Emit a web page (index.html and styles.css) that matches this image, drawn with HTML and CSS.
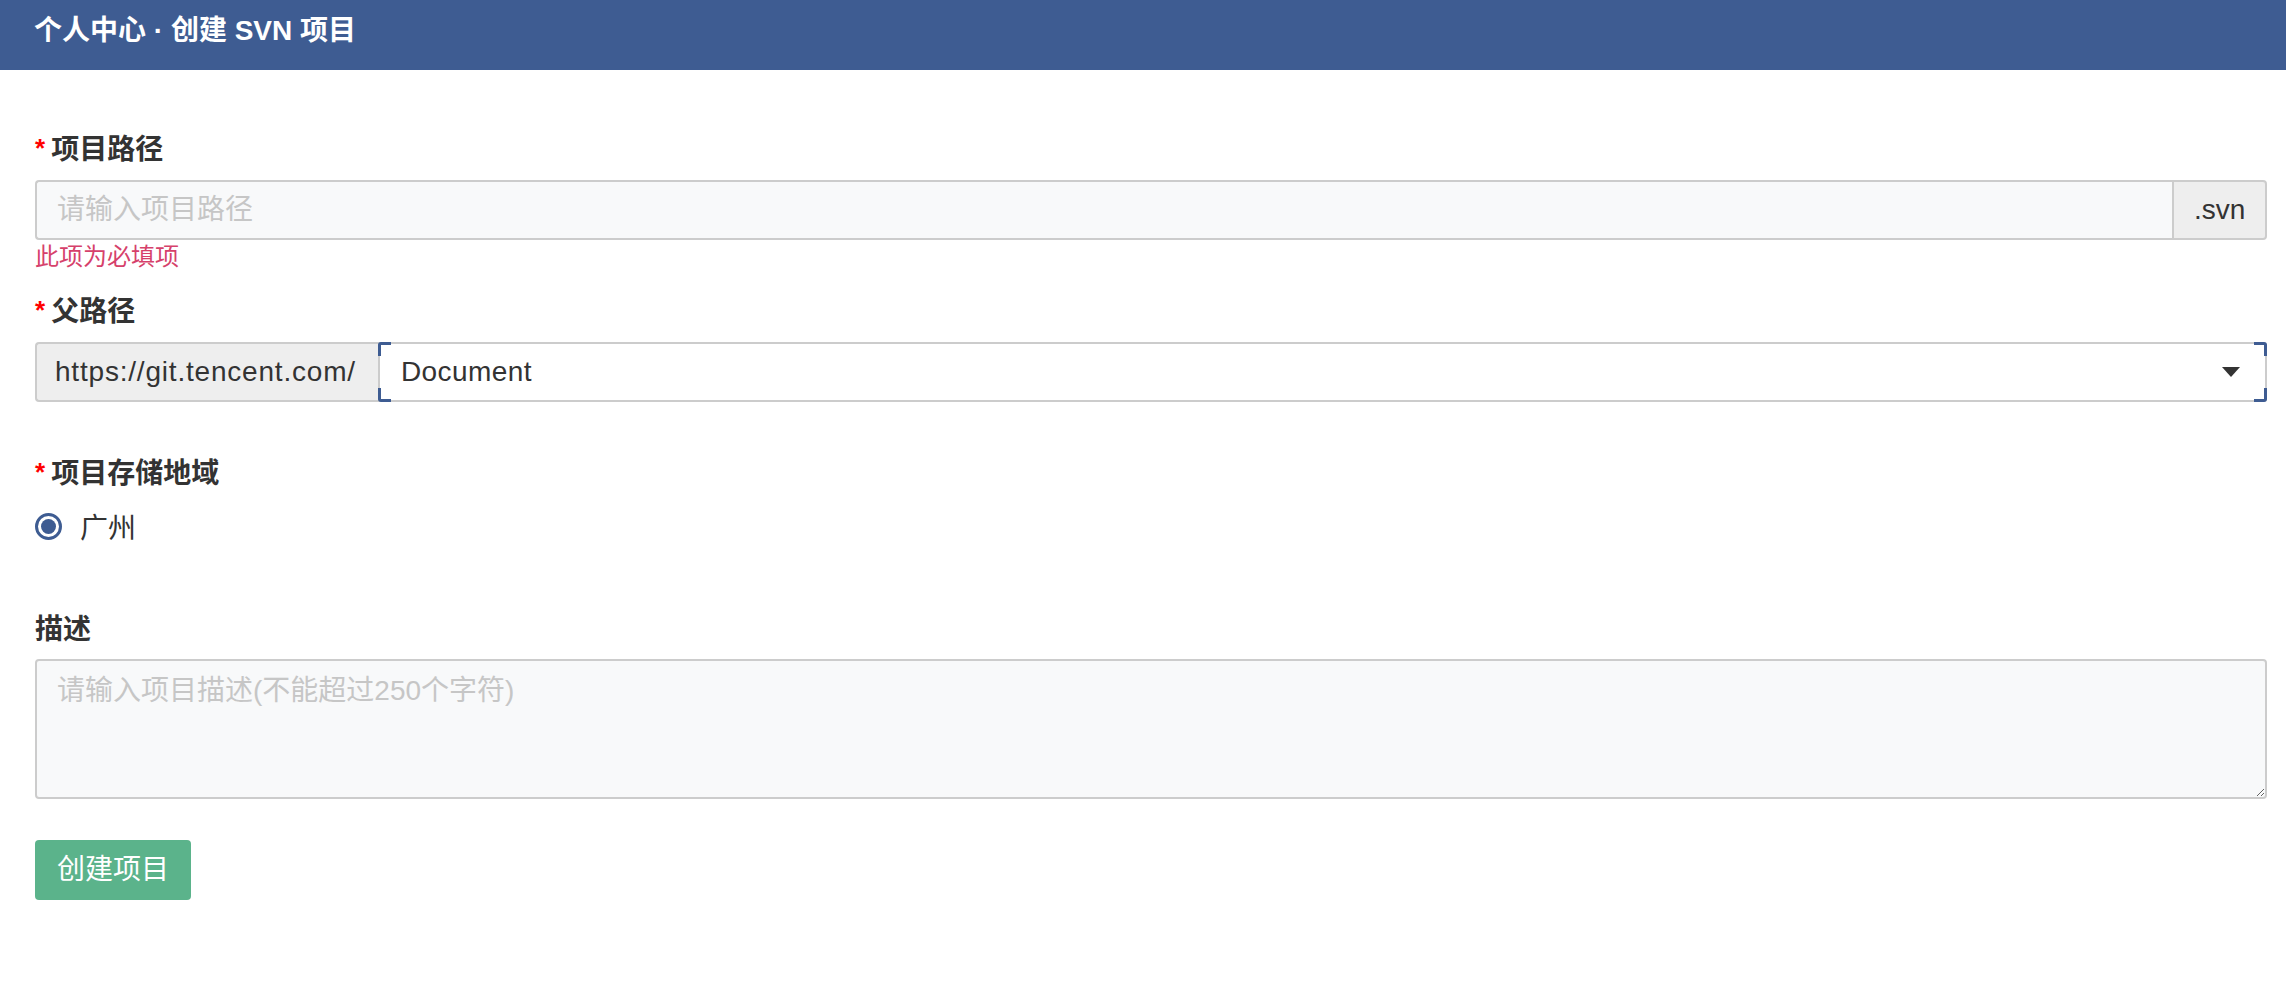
FILE: index.html
```html
<!DOCTYPE html>
<html lang="zh-CN">
<head>
<meta charset="utf-8">
<title>个人中心 · 创建 SVN 项目</title>
<link rel="stylesheet" href="styles.css">
</head>
<body>
<header class="topbar">
  <h1 class="title">个人中心 · 创建 SVN 项目</h1>
</header>
<main class="form">
  <section class="field field-path">
    <label class="label"><span class="req">*</span>项目路径</label>
    <div class="group">
      <input class="control control-input" type="text" placeholder="请输入项目路径">
      <span class="addon addon-right">.svn</span>
    </div>
    <div class="error">此项为必填项</div>
  </section>

  <section class="field field-parent">
    <label class="label"><span class="req">*</span>父路径</label>
    <div class="group">
      <span class="addon addon-left">https://git.tencent.com/</span>
      <div class="select">
        <span class="select-value">Document</span>
        <span class="caret"></span>
      </div>
    </div>
  </section>

  <section class="field field-region">
    <label class="label"><span class="req">*</span>项目存储地域</label>
    <div class="radio-row">
      <span class="radio"><span class="radio-dot"></span></span>
      <span class="radio-text">广州</span>
    </div>
  </section>

  <section class="field field-desc">
    <label class="label">描述</label>
    <textarea class="control control-textarea" placeholder="请输入项目描述(不能超过250个字符)"></textarea>
  </section>

  <button class="btn-create" type="button">创建项目</button>
</main>
</body>
</html>
```

FILE: styles.css
```css
* { box-sizing: border-box; }

html, body {
  margin: 0;
  padding: 0;
  background: #ffffff;
}

body {
  font-family: "Liberation Sans", "Noto Sans CJK SC", sans-serif;
  font-size: 28px;
  color: #333333;
}

.topbar {
  height: 70px;
  background: #3e5c92;
  display: flex;
  align-items: center;
  padding: 0 34px 8px;
}

.title {
  margin: 0;
  font-size: 28px;
  line-height: 40px;
  font-weight: bold;
  color: #ffffff;
}

.form {
  padding: 0 19px 0 35px;
  display: flex;
  flex-direction: column;
  align-items: flex-start;
}

.field {
  width: 100%;
  display: flex;
  flex-direction: column;
}

.field-path { margin-top: 58px; }
.field-parent { margin-top: 16px; }
.field-region { margin-top: 50px; }
.field-desc { margin-top: 64px; }

.label {
  font-size: 28px;
  line-height: 40px;
  font-weight: bold;
  color: #333333;
  margin-bottom: 10px;
}

.req {
  color: #ff0000;
  font-size: 26px;
  font-weight: bold;
  margin-right: 6px;
  vertical-align: 2px;
}

.group {
  display: flex;
  height: 60px;
  width: 100%;
}

.control {
  font-family: "Liberation Sans", "Noto Sans CJK SC", sans-serif;
  font-size: 28px;
  color: #333333;
  background: #f8f9fa;
  border: 2px solid #cccccc;
  outline: none;
}

.control::placeholder {
  color: #c6c6c6;
}

.control-input {
  flex: 1;
  min-width: 0;
  height: 60px;
  padding: 0 20px;
  border-right: 0;
  border-radius: 4px 0 0 4px;
}

.addon {
  display: flex;
  align-items: center;
  background: #eeeeee;
  border: 2px solid #cccccc;
  color: #333333;
  font-size: 28px;
  white-space: nowrap;
}

.addon-right {
  width: 95px;
  padding: 0 20px;
  border-radius: 0 4px 4px 0;
}

.addon-left {
  width: 343px;
  padding: 0 18px;
  letter-spacing: 0.8px;
  border-right: 0;
  border-radius: 4px 0 0 4px;
}

.error {
  font-size: 24px;
  line-height: 34px;
  color: #d6416b;
}

.select {
  position: relative;
  flex: 1;
  display: flex;
  align-items: center;
  padding: 0 25px 0 21px;
  background: #ffffff;
  border: 2px solid #cccccc;
  border-radius: 0 4px 4px 0;
  letter-spacing: 0.4px;
}

.select::after {
  content: "";
  position: absolute;
  top: -2px;
  bottom: -2px;
  left: -2px;
  right: -2px;
  pointer-events: none;
  border-radius: 3px;
  background:
    linear-gradient(#3e5c92, #3e5c92) left top / 13px 3px no-repeat,
    linear-gradient(#3e5c92, #3e5c92) left top / 3px 14px no-repeat,
    linear-gradient(#3e5c92, #3e5c92) left bottom / 13px 3px no-repeat,
    linear-gradient(#3e5c92, #3e5c92) left bottom / 3px 14px no-repeat,
    linear-gradient(#3e5c92, #3e5c92) right top / 13px 3px no-repeat,
    linear-gradient(#3e5c92, #3e5c92) right top / 3px 14px no-repeat,
    linear-gradient(#3e5c92, #3e5c92) right bottom / 13px 3px no-repeat,
    linear-gradient(#3e5c92, #3e5c92) right bottom / 3px 14px no-repeat;
}

.select-value {
  flex: 1;
  color: #333333;
}

.caret {
  width: 0;
  height: 0;
  border-left: 9px solid transparent;
  border-right: 9px solid transparent;
  border-top: 10px solid #333333;
}

.radio-row {
  display: flex;
  align-items: center;
  height: 40px;
  margin-top: 2px;
}

.radio {
  width: 27px;
  height: 27px;
  border: 3px solid #3e5c92;
  border-radius: 50%;
  display: flex;
  align-items: center;
  justify-content: center;
  background: #ffffff;
}

.radio-dot {
  width: 15px;
  height: 15px;
  border-radius: 50%;
  background: #3e5c92;
}

.radio-text {
  margin-left: 18px;
  font-size: 28px;
  color: #333333;
}

.control-textarea {
  width: 100%;
  height: 140px;
  padding: 10px 20px;
  line-height: 40px;
  border-radius: 4px;
  resize: vertical;
  margin-top: -1px;
}

.btn-create {
  margin-top: 41px;
  height: 60px;
  padding: 0 22px;
  background: #5bb38b;
  color: #ffffff;
  border: 0;
  border-radius: 4px;
  font-family: "Liberation Sans", "Noto Sans CJK SC", sans-serif;
  font-size: 28px;
  line-height: 60px;
}
```
